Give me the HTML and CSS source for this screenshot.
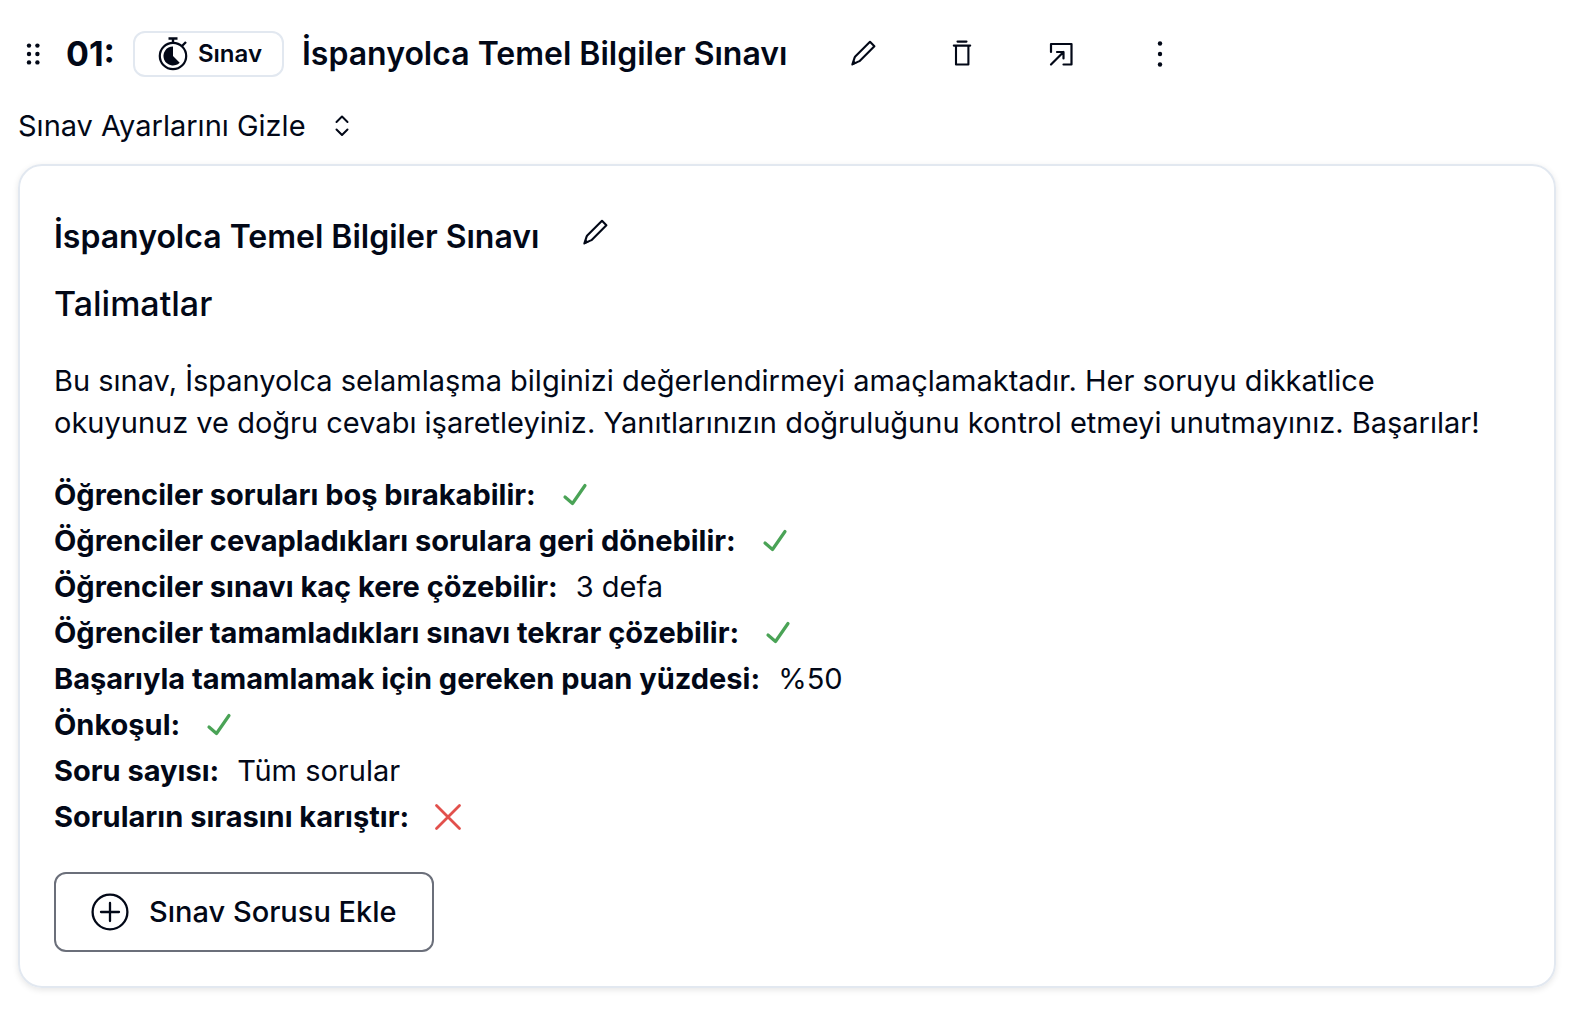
FILE: index.html
```html
<!DOCTYPE html>
<html lang="tr">
<head>
  <meta charset="UTF-8">
  <meta name="viewport" content="width=device-width, initial-scale=1">
  <title>İspanyolca Temel Bilgiler Sınavı</title>
  <link rel="stylesheet" href="styles.css">
</head>

<body>

<!-- Shared icons -->
<svg class="sprite" aria-hidden="true">
  <symbol id="icon-pencil" viewBox="0 0 30 30">
    <path d="M22 2.8 L26.4 7.2 L12.2 21.4 Q11.6 22 10.8 22.4 L4.4 25.4 L6.6 18.6 Q6.9 17.8 7.5 17.2 Z" fill="none" stroke="currentColor" stroke-width="2.1" stroke-linejoin="round"/>
    <path d="M5.4 21 L8.6 24.2 L3.6 26.4 Z" fill="currentColor"/>
  </symbol>
  <symbol id="icon-check" viewBox="0 0 30 30">
    <path d="M5 17 L12.5 23.5 L25 5.5" fill="none" stroke="currentColor" stroke-width="3.2" stroke-linecap="round" stroke-linejoin="round"/>
  </symbol>
</svg>

<main class="page">

  <!-- Item header -->
  <header class="item-header">
    <button type="button" class="drag-handle" aria-label="Sürükle">
      <svg width="16" height="24" viewBox="0 0 16 24" fill="currentColor">
        <circle cx="4" cy="3.6" r="2.2"/><circle cx="12.4" cy="3.6" r="2.2"/>
        <circle cx="4" cy="12" r="2.2"/><circle cx="12.4" cy="12" r="2.2"/>
        <circle cx="4" cy="20.4" r="2.2"/><circle cx="12.4" cy="20.4" r="2.2"/>
      </svg>
    </button>
    <span class="item-number">01:</span>
    <span class="badge">
      <svg width="32" height="34" viewBox="0 0 32 34" fill="none" stroke="currentColor">
        <circle cx="15" cy="19" r="13.2" stroke-width="2.2"/>
        <path d="M10.5 1.5 H19.5 M15 1.5 V6 M23.5 9.5 L28 5" stroke-width="2.4"/>
        <path d="M15 9.5 A9.5 9.5 0 1 0 21.7 25.7 L15 19 Z" fill="currentColor" stroke="none"/>
      </svg>
      Sınav
    </span>
    <h1 class="title">İspanyolca Temel Bilgiler Sınavı</h1>
    <div class="actions">
      <button type="button" class="icon-button" aria-label="Düzenle">
        <svg width="30" height="30"><use href="#icon-pencil"/></svg>
      </button>
      <button type="button" class="icon-button" aria-label="Sil">
        <svg width="30" height="30" viewBox="0 0 30 30" fill="none" stroke="currentColor" stroke-width="2.1" stroke-linecap="round" stroke-linejoin="round">
          <path d="M10.5 2.6 H19.5 M6.8 6.6 H23.2 M9 6.6 V25.5 H21.4 V6.6"/>
        </svg>
      </button>
      <button type="button" class="icon-button" aria-label="Aç">
        <svg width="30" height="30" viewBox="0 0 30 30" fill="none" stroke="currentColor" stroke-width="2.2" stroke-linecap="round" stroke-linejoin="round">
          <path d="M5 13 V5 H25.5 V25.5 H17.5 M5 25.5 L17.5 13 M11 13 H17.5 V19.5"/>
        </svg>
      </button>
      <button type="button" class="icon-button" aria-label="Diğer">
        <svg width="30" height="30" viewBox="0 0 30 30" fill="currentColor">
          <circle cx="15" cy="4.5" r="2.2"/><circle cx="15" cy="15" r="2.2"/><circle cx="15" cy="25.5" r="2.2"/>
        </svg>
      </button>
    </div>
  </header>

  <button type="button" class="toggle" aria-expanded="true" aria-controls="settings">
    Sınav Ayarlarını Gizle
    <svg width="16" height="24" viewBox="0 0 16 24" fill="none" stroke="currentColor" stroke-width="2" stroke-linecap="round" stroke-linejoin="round">
      <path d="M2.5 8 L8 2.5 L13.5 8 M2.5 15.5 L8 21 L13.5 15.5"/>
    </svg>
  </button>

  <!-- Exam settings -->
  <section class="card" id="settings">
    <div class="card-header">
      <h2 class="title">İspanyolca Temel Bilgiler Sınavı</h2>
      <button type="button" class="icon-button" aria-label="Başlığı düzenle">
        <svg width="30" height="30"><use href="#icon-pencil"/></svg>
      </button>
    </div>
    <h3 class="subtitle">Talimatlar</h3>
    <p class="description">Bu sınav, İspanyolca selamlaşma bilginizi değerlendirmeyi amaçlamaktadır. Her soruyu dikkatlice okuyunuz ve doğru cevabı işaretleyiniz. Yanıtlarınızın doğruluğunu kontrol etmeyi unutmayınız. Başarılar!</p>

    <dl class="settings">
      <div class="setting">
        <dt>Öğrenciler soruları boş bırakabilir:</dt>
        <dd class="yes"><svg width="30" height="30" role="img" aria-label="Evet"><use href="#icon-check"/></svg></dd>
      </div>
      <div class="setting">
        <dt>Öğrenciler cevapladıkları sorulara geri dönebilir:</dt>
        <dd class="yes"><svg width="30" height="30" role="img" aria-label="Evet"><use href="#icon-check"/></svg></dd>
      </div>
      <div class="setting">
        <dt>Öğrenciler sınavı kaç kere çözebilir:</dt>
        <dd>3 defa</dd>
      </div>
      <div class="setting">
        <dt>Öğrenciler tamamladıkları sınavı tekrar çözebilir:</dt>
        <dd class="yes"><svg width="30" height="30" role="img" aria-label="Evet"><use href="#icon-check"/></svg></dd>
      </div>
      <div class="setting">
        <dt>Başarıyla tamamlamak için gereken puan yüzdesi:</dt>
        <dd>%50</dd>
      </div>
      <div class="setting">
        <dt>Önkoşul:</dt>
        <dd class="yes"><svg width="30" height="30" role="img" aria-label="Evet"><use href="#icon-check"/></svg></dd>
      </div>
      <div class="setting">
        <dt>Soru sayısı:</dt>
        <dd>Tüm sorular</dd>
      </div>
      <div class="setting">
        <dt>Soruların sırasını karıştır:</dt>
        <dd class="no">
          <svg width="30" height="30" viewBox="0 0 30 30" role="img" aria-label="Hayır">
            <path d="M3.5 3.5 L26.5 26.5 M26.5 3.5 L3.5 26.5" stroke="currentColor" stroke-width="2.8" stroke-linecap="round"/>
          </svg>
        </dd>
      </div>
    </dl>

    <button type="button" class="add-button">
      <svg width="38" height="38" viewBox="0 0 38 38" fill="none" stroke="currentColor" stroke-width="2.3" stroke-linecap="round">
        <circle cx="19" cy="19" r="17.4"/>
        <path d="M10 19 H28 M19 10 V28"/>
      </svg>
      Sınav Sorusu Ekle
    </button>
  </section>

</main>

</body>
</html>
```
FILE: styles.css
```css
* {
  box-sizing: border-box;
  padding: 0;
  margin: 0;
}

body {
  font-family: Inter, sans-serif;
  font-size: 29px;
  line-height: 42px;
  color: #020817;
  background: #fff;
}

button {
  font: inherit;
  color: inherit;
  background: none;
  border: none;
  cursor: pointer;
}

svg {
  display: block;
  flex-shrink: 0;
}

.sprite {
  position: absolute;
  width: 0;
  height: 0;
}

.page {
  padding: 31px 18px 26px;
}

/* Item header */
.item-header {
  display: flex;
  align-items: center;
  gap: 18px;
  padding-left: 7px;
}

.drag-handle {
  margin-right: 7px;
}

.item-number {
  font-size: 34px;
  font-weight: 700;
}

.title {
  font-size: 32px;
  font-weight: 600;
}

.badge {
  display: flex;
  align-items: center;
  gap: 8px;
  height: 46px;
  padding: 0 20px 0 23px;
  border: 2px solid #e2e8f0;
  border-radius: 12px;
  font-size: 24px;
  font-weight: 600;
}

.actions {
  display: flex;
  gap: 35px;
  margin-left: 26px;
}

.icon-button {
  display: flex;
  justify-content: center;
  width: 64px;
  padding: 8px 0;
}

.toggle {
  display: flex;
  align-items: center;
  gap: 28px;
  margin: 28px 0 17px;
}

/* Exam settings */
.card {
  padding: 34px;
  border: 2px solid #e2e8f0;
  border-radius: 24px;
  box-shadow: 0 2px 6px rgba(0,0,0,0.1);
}

.card-header {
  display: flex;
  gap: 24px;
  margin-top: 10px;
}

.card-header .title {
  padding-top: 6px;
}

.subtitle {
  margin-top: 25px;
  font-size: 34px;
  font-weight: 500;
}

.description {
  margin: 35px 0 30px;
  padding-right: 18px;
}

.settings {
  display: grid;
  gap: 4px;
}

.setting {
  display: flex;
  align-items: center;
  gap: 18px;
}

dt {
  font-weight: 700;
}

dd svg {
  margin-left: 6px;
}

.yes {
  color: #4aa356;
}

.no {
  color: #e2504c;
}

.add-button {
  display: flex;
  align-items: center;
  gap: 20px;
  height: 80px;
  margin-top: 34px;
  padding: 0 35px;
  border: 2px solid #6b6f7a;
  border-radius: 12px;
  font-weight: 500;
}
```
